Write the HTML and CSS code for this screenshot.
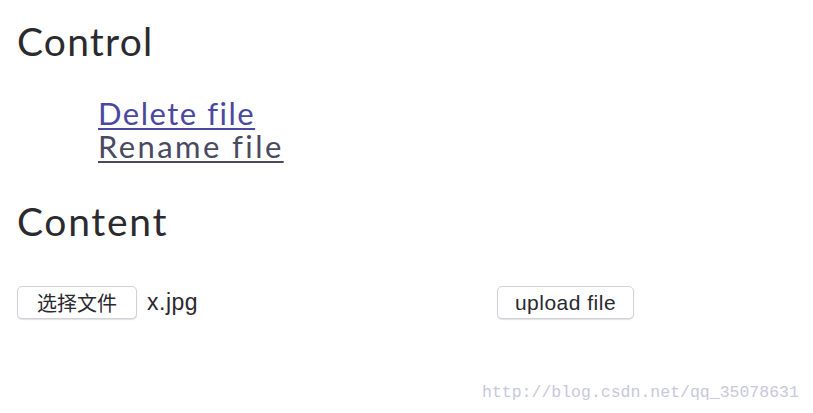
FILE: index.html
```html
<!DOCTYPE html>
<html lang="zh">
<head>
<meta charset="utf-8">
<title>Control</title>
<link rel="stylesheet" href="styles.css">
</head>
<body>
<main class="page">
  <section class="block">
    <h2 class="title">Control</h2>
    <ul class="links">
      <li><a class="link link-new" href="#">Delete file</a></li>
      <li><a class="link link-visited" href="#">Rename file</a></li>
    </ul>
  </section>
  <section class="block">
    <h2 class="title title-content">Content</h2>
    <form class="upload-row">
      <div class="file-field">
        <span class="btn btn-choose">选择文件</span>
        <span class="file-name">x.jpg</span>
      </div>
      <button type="button" class="btn btn-upload">upload file</button>
    </form>
  </section>
  <footer class="watermark">http://blog.csdn.net/qq_35078631</footer>
</main>
</body>
</html>
```

FILE: styles.css
```css
html, body {
  margin: 0;
  padding: 0;
  background: #ffffff;
}
.page {
  width: 813px;
  height: 413px;
  box-sizing: border-box;
  padding: 18px 0 0 17px;
  display: flex;
  flex-direction: column;
  font-family: Lato, "Noto Sans", sans-serif;
  color: #2b2a2e;
}
.title {
  margin: 0;
  font-family: Lato, sans-serif;
  font-weight: 400;
  font-size: 39px;
  line-height: 46px;
  letter-spacing: 1.2px;
  color: #2b2a2f;
}
.title-content {
  margin-top: 35px;
  letter-spacing: 1.7px;
}
.links {
  list-style: none;
  margin: 33px 0 0 0;
  padding: 0 0 0 81px;
  display: flex;
  flex-direction: column;
}
.links li {
  line-height: 33px;
  height: 33px;
}
.link {
  display: inline-block;
  height: 33px;
  line-height: 33px;
  font-family: Lato, sans-serif;
  font-size: 31px;
  text-decoration: underline;
  text-decoration-thickness: 2px;
  text-underline-offset: 3px;
}
.link-new {
  color: #4a48a0;
  letter-spacing: 1.5px;
}
.link-visited {
  color: #4b4962;
  letter-spacing: 2.4px;
}
.upload-row {
  margin: 42px 0 0 0;
  display: flex;
  align-items: center;
}
.file-field {
  display: flex;
  align-items: center;
  gap: 10px;
  width: 480px;
}
.btn {
  box-sizing: border-box;
  height: 33px;
  border: 1px solid #d2d1da;
  border-radius: 5px;
  background: #ffffff;
  box-shadow: 0 1px 1px rgba(0, 0, 0, 0.12);
  font-family: "Liberation Sans", "Noto Sans CJK SC", sans-serif;
  font-size: 21px;
  letter-spacing: 0.5px;
  color: #2a2930;
  display: inline-flex;
  align-items: center;
  justify-content: center;
}
.btn-choose {
  width: 120px;
  font-family: "Noto Sans CJK SC", sans-serif;
  font-size: 20px;
  letter-spacing: 0;
}
.file-name {
  font-family: "Liberation Sans", sans-serif;
  font-size: 23px;
  letter-spacing: 0.5px;
  color: #2a2930;
}
.btn-upload {
  width: 137px;
  padding: 0;
}
.watermark {
  margin: 64px 0 0 465px;
  font-family: "Liberation Mono", monospace;
  font-size: 16.5px;
  color: #c9c8dc;
}
```
